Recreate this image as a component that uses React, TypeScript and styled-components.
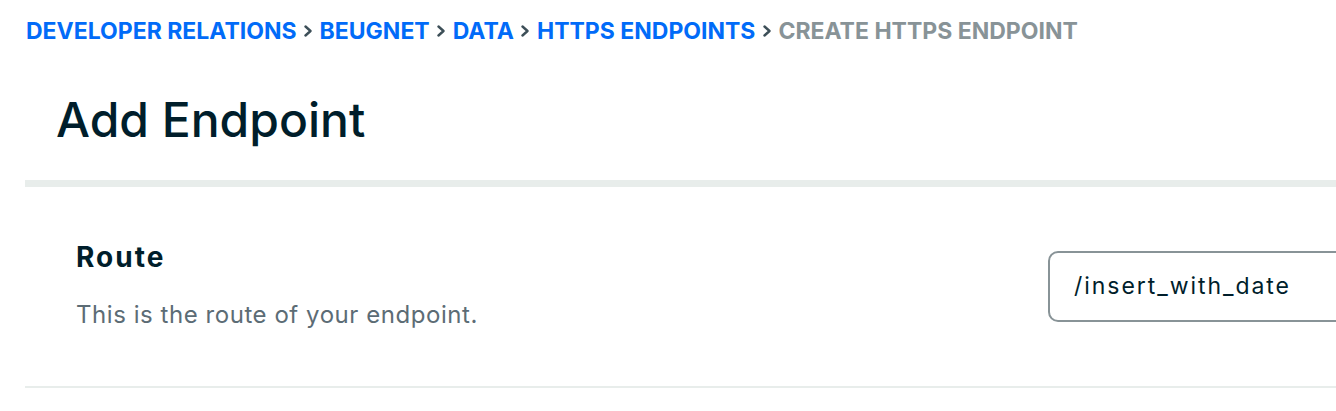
import React from "react";
import styled, { createGlobalStyle } from "styled-components";

const Global = createGlobalStyle`
  html, body { margin: 0; padding: 0; background: #ffffff; }
  body { overflow: hidden; font-family: Inter, "Noto Sans", sans-serif; }
`;

const Page = styled.div`
  width: 1336px;
  height: 411px;
  overflow: hidden;
`;

const Content = styled.div`
  width: 1600px;
  padding-left: 25px;
`;

const Breadcrumbs = styled.nav`
  display: flex;
  align-items: center;
  gap: 6.5px;
  height: 62px;
  padding-left: 1px;
  font-size: 23px;
  font-weight: 700;
  text-transform: uppercase;
`;

const Crumb = styled.span<{ $current?: boolean }>`
  color: ${(p) => (p.$current ? "#889397" : "#016BF8")};
`;

const Chevron = styled.svg`
  width: 10px;
  height: 12px;
  flex: none;
`;

const Header = styled.header`
  padding: 28px 0 30px 31px;
  border-bottom: 7px solid #e8edeb;
`;

const Title = styled.h1`
  margin: 0;
  font-size: 48px;
  font-weight: 500;
  line-height: 60px;
  color: #001e2b;
`;

const Row = styled.section`
  display: grid;
  grid-template-columns: 972px 440px;
  align-items: center;
  padding: 55px 0 56px 51px;
  border-bottom: 2px solid #e8edeb;
`;

const Label = styled.div`
  display: flex;
  flex-direction: column;
  gap: 27px;
`;

const LabelTitle = styled.h2`
  margin: 0;
  font-size: 28px;
  font-weight: 700;
  letter-spacing: 2px;
  line-height: 31px;
  color: #001e2b;
`;

const Description = styled.p`
  margin: 0;
  font-size: 24px;
  letter-spacing: 0.55px;
  line-height: 30px;
  color: #5c6c75;
`;

const Input = styled.input`
  box-sizing: border-box;
  height: 71px;
  width: 440px;
  padding: 0 24px;
  border: 2px solid #889397;
  border-radius: 10px;
  font-family: inherit;
  font-size: 23px;
  letter-spacing: 1.95px;
  color: #001e2b;
  background: #fff;
  outline: none;
`;

const Sep = () => (
  <Chevron viewBox="0 0 10 12" aria-hidden="true">
    <path d="M2.5 1.5 L7.5 6 L2.5 10.5" fill="none" stroke="#3d4f58" strokeWidth="2.4" strokeLinecap="round" strokeLinejoin="round" />
  </Chevron>
);

export default function App() {
  return (
    <Page>
      <Global />
      <Content>
        <Breadcrumbs>
          <Crumb>Developer Relations</Crumb>
          <Sep />
          <Crumb>Beugnet</Crumb>
          <Sep />
          <Crumb>Data</Crumb>
          <Sep />
          <Crumb>HTTPS Endpoints</Crumb>
          <Sep />
          <Crumb $current>Create HTTPS Endpoint</Crumb>
        </Breadcrumbs>
        <Header>
          <Title>Add Endpoint</Title>
        </Header>
        <Row>
          <Label>
            <LabelTitle>Route</LabelTitle>
            <Description>This is the route of your endpoint.</Description>
          </Label>
          <Input defaultValue="/insert_with_date" readOnly />
        </Row>
      </Content>
    </Page>
  );
}
